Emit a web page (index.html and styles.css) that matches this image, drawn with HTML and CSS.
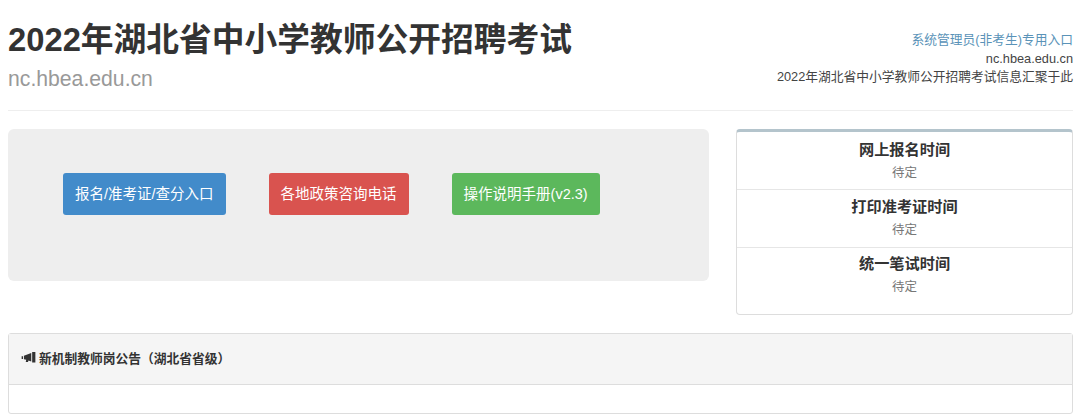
FILE: index.html
```html
<!DOCTYPE html>
<html lang="zh-CN">
<head>
<meta charset="utf-8">
<title>2022年湖北省中小学教师公开招聘考试</title>
<link rel="stylesheet" href="styles.css">
</head>
<body>
<header class="page-header">
  <div class="brand">
    <h1 class="brand-title">2022年湖北省中小学教师公开招聘考试</h1>
    <div class="brand-sub">nc.hbea.edu.cn</div>
  </div>
  <div class="meta">
    <a class="meta-link" href="#">系统管理员(非考生)专用入口</a>
    <div>nc.hbea.edu.cn</div>
    <div>2022年湖北省中小学教师公开招聘考试信息汇聚于此</div>
  </div>
</header>
<main class="top-row">
  <section class="jumbo">
    <a class="btn btn-blue" href="#">报名/准考证/查分入口</a>
    <a class="btn btn-red" href="#">各地政策咨询电话</a>
    <a class="btn btn-green" href="#">操作说明手册(v2.3)</a>
  </section>
  <aside class="times">
    <div class="time-item"><h2 class="time-title">网上报名时间</h2><p class="time-value">待定</p></div>
    <div class="time-item"><h2 class="time-title">打印准考证时间</h2><p class="time-value">待定</p></div>
    <div class="time-item"><h2 class="time-title">统一笔试时间</h2><p class="time-value">待定</p></div>
  </aside>
</main>
<section class="notice">
  <div class="notice-head">
    <svg class="notice-icon" viewBox="0 0 16 12" aria-hidden="true"><path d="M0.5 4.5h1.5v3H0.5zM3 4l8-2.8V10.4L8 9.4 7.4 11H5L5.5 8.5 3 7.8zM12 0h3.5v11.5H12z"/></svg>
    <span>新机制教师岗公告（湖北省省级）</span>
  </div>
  <div class="notice-body"></div>
</section>
</body>
</html>
```
FILE: styles.css
```css
* { box-sizing: border-box; }
html, body { margin: 0; padding: 0; background: #fff; }
body {
  width: 1080px;
  height: 417px;
  overflow: hidden;
  padding: 0 7px 0 8px;
  font-family: "Liberation Sans", "Noto Sans CJK SC", sans-serif;
  color: #333;
}
.page-header {
  display: flex;
  justify-content: space-between;
  height: 111px;
  border-bottom: 1px solid #eee;
  padding-top: 21px;
}
.brand-title {
  margin: 0;
  font-size: 32.75px;
  line-height: 38px;
  font-weight: 700;
  color: #333;
}
.brand-sub {
  margin-top: 7px;
  font-size: 21.2px;
  line-height: 26px;
  color: #999;
}
.meta {
  padding-top: 10px;
  text-align: right;
  font-size: 12.75px;
  line-height: 18.5px;
  color: #444;
}
.meta-link { color: #5a93b8; text-decoration: none; display: block; }
.top-row {
  display: flex;
  justify-content: space-between;
  align-items: flex-start;
  margin-top: 18px;
}
.jumbo {
  width: 701px;
  height: 152px;
  background: #eee;
  border-radius: 6px;
  padding: 44px 55px;
  display: flex;
  align-items: flex-start;
  gap: 43px;
}
.btn {
  display: block;
  height: 42px;
  line-height: 42px;
  padding: 0 12px;
  border-radius: 3px;
  color: #fff;
  font-size: 14.5px;
  text-decoration: none;
  white-space: nowrap;
}
.btn-blue { background: #428bca; }
.btn-red { background: #d9534f; }
.btn-green { background: #5cb85c; }
.times {
  width: 337px;
  height: 186px;
  border: 1px solid #ddd;
  border-top: 3px solid #b4c4cc;
  border-radius: 4px;
  text-align: center;
}
.time-item { height: 58px; padding-top: 7px; border-top: 1px solid #e6e6e6; }
.time-item:first-child { height: 57px; padding-top: 8px; border-top: 0; }
.time-item:last-child { padding-top: 6px; }
.time-title {
  margin: 0;
  font-size: 15.2px;
  line-height: 20px;
  font-weight: 700;
  color: #333;
}
.time-value {
  margin: 5px 0 0;
  font-size: 12.5px;
  line-height: 16px;
  color: #777;
}
.notice {
  margin-top: 18px;
  height: 81px;
  border: 1px solid #ddd;
  border-radius: 3px;
}
.notice-head {
  height: 51px;
  background: #f5f5f5;
  border-bottom: 1px solid #ddd;
  padding: 0 0 3px 12px;
  display: flex;
  align-items: center;
  gap: 3px;
  font-size: 12.75px;
  font-weight: 700;
  color: #333;
}
.notice-icon { width: 15px; height: 11px; fill: #333; }
```
